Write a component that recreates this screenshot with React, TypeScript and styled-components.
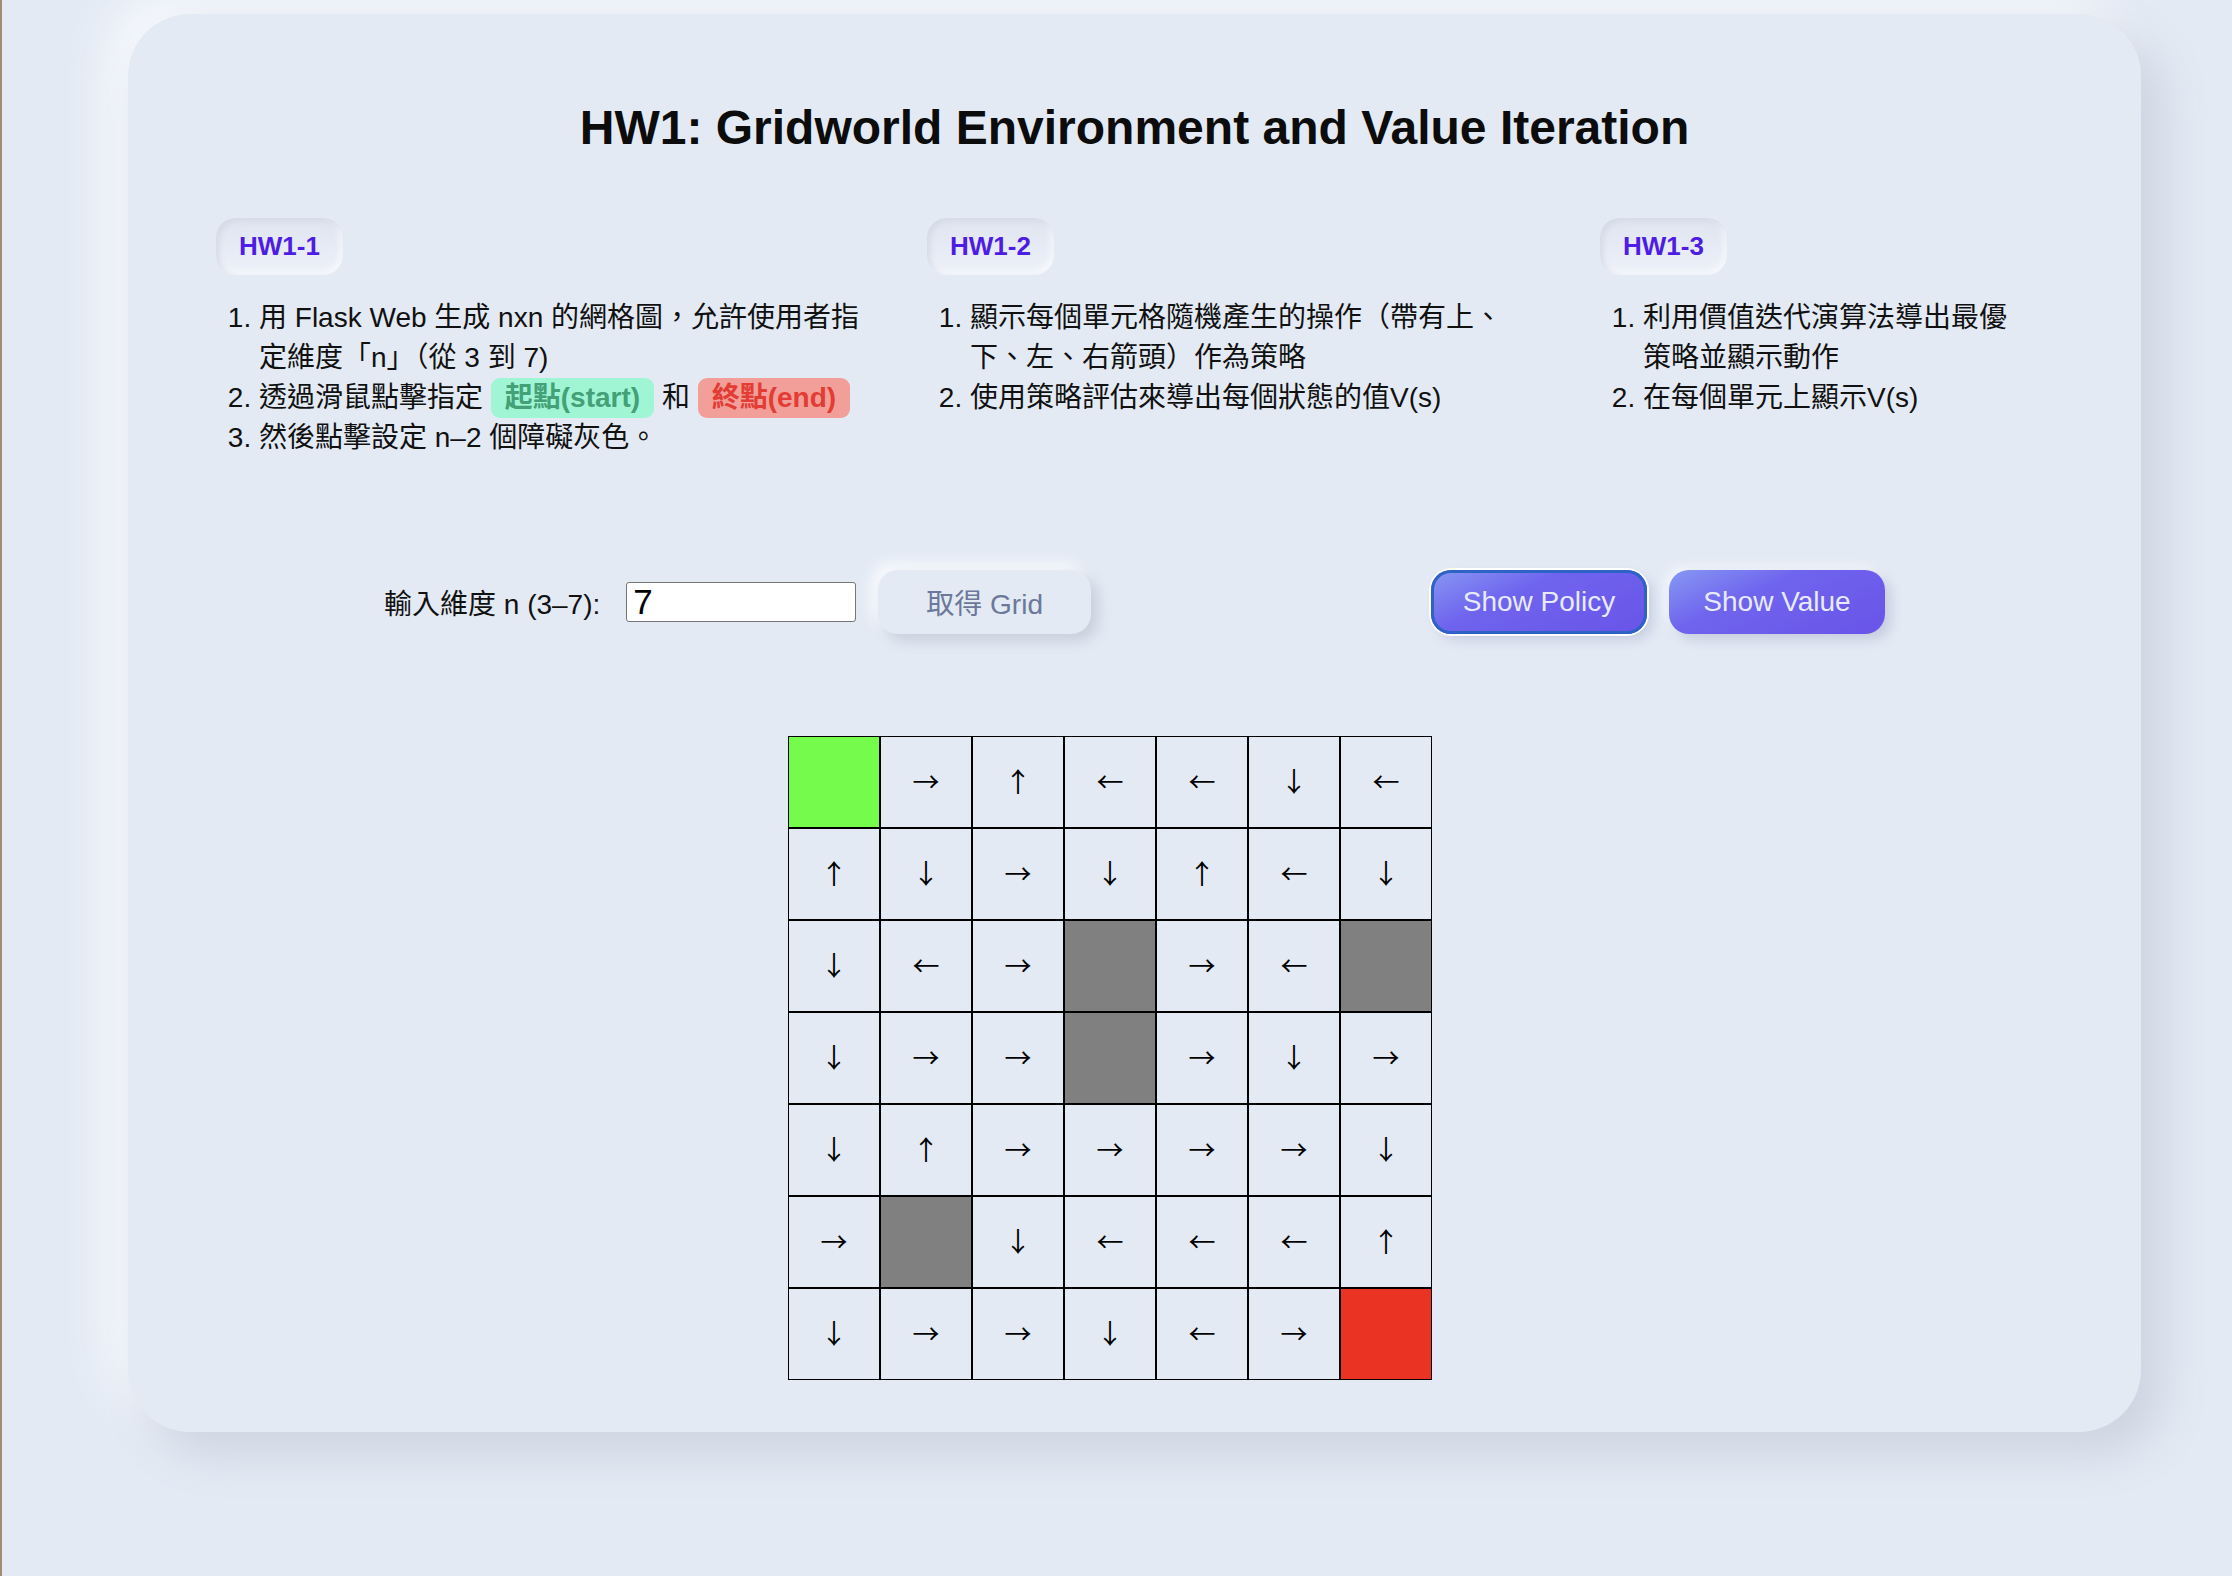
import React, { useState } from 'react';
import styled, { createGlobalStyle, css } from 'styled-components';

type CellKind = 'start' | 'end' | 'wall' | 'arrow';

interface Cell {
  kind: CellKind;
  arrow?: string;
}

const GlobalStyle = createGlobalStyle`
  html, body {
    margin: 0;
    padding: 0;
    background: #e3eaf4;
  }
  body {
    font-family: "Liberation Sans", "Noto Sans CJK TC", sans-serif;
    color: #111;
  }
`;

const Page = styled.div`
  min-height: 100vh;
  box-sizing: border-box;
  border-left: 2px solid #a08b74;
  padding: 14px 0 40px 126px;
`;

const Card = styled.main`
  width: 2013px;
  box-sizing: border-box;
  padding: 85px 88px 52px;
  border-radius: 62px;
  background: #e3eaf4;
  box-shadow: 22px 22px 46px #cdd4e1, -22px -22px 46px #f6f8fc;
`;

const Title = styled.h1`
  margin: 0;
  text-align: center;
  font-size: 48px;
  line-height: 58px;
  font-weight: 700;
  color: #0c0c0c;
`;

const Sections = styled.section`
  display: grid;
  grid-template-columns: 711px 673px 1fr;
  margin-top: 61px;
`;

const Section = styled.div`
  display: flex;
  flex-direction: column;
  align-items: flex-start;
`;

const Badge = styled.span`
  display: inline-flex;
  align-items: center;
  height: 57px;
  padding: 0 23px;
  border-radius: 20px;
  font-size: 26px;
  font-weight: 700;
  color: #4d1de3;
  background: linear-gradient(180deg, #dfe4f0 0%, #e8ecf6 60%, #eef1f9 100%);
  box-shadow: inset 3px 3px 6px #d3d9e6, inset -3px -3px 6px #f7f9fd;
`;

const Steps = styled.ol<{ $width: number }>`
  width: ${(p) => p.$width}px;
  margin: 23px 0 0;
  padding-left: 43px;
  box-sizing: border-box;
  font-size: 28px;
  line-height: 40px;
`;

const Tag = styled.span<{ $tone: 'green' | 'red' }>`
  display: inline-block;
  padding: 0 14px;
  border-radius: 9px;
  font-weight: 700;
  ${(p) =>
    p.$tone === 'green'
      ? css`
          background: #a0f5d5;
          color: #43a077;
        `
      : css`
          background: #f29f99;
          color: #e23c35;
        `}
`;

const Controls = styled.div`
  display: flex;
  justify-content: space-between;
  align-items: center;
  padding: 0 168px;
  margin-top: 112px;
`;

const Group = styled.div`
  display: flex;
  align-items: center;
  gap: 22px;
`;

const Label = styled.label`
  font-size: 28px;
  padding-right: 4px;
`;

const NumberInput = styled.input`
  width: 230px;
  height: 40px;
  box-sizing: border-box;
  padding: 0 6px;
  border: 1px solid #767676;
  border-radius: 3px;
  background: #fff;
  font-family: "Liberation Sans", sans-serif;
  font-size: 35px;
  color: #000;
  outline: none;
`;

const SoftButton = styled.button`
  height: 64px;
  padding: 0 48px;
  border: none;
  border-radius: 20px;
  background: #e3eaf4;
  color: #6b7899;
  font-family: inherit;
  font-size: 28px;
  box-shadow: 7px 7px 14px #c8cfdc, -7px -7px 14px #f8fafd;
  cursor: pointer;
`;

const PrimaryButton = styled.button<{ $focused?: boolean }>`
  width: 216px;
  height: 64px;
  border: none;
  border-radius: 20px;
  background: linear-gradient(155deg, #8798f3 0%, #6f64ee 38%, #6954e8 100%);
  color: #e8ebff;
  font-family: inherit;
  font-size: 28px;
  cursor: pointer;
  box-shadow: ${(p) =>
    p.$focused
      ? 'inset 0 0 0 3px #2e63c6, 0 0 0 2px #ffffff, 6px 6px 12px #c6cde0'
      : '6px 6px 12px #c6cde0, -4px -4px 10px #f3f5fb'};
`;

const BoardWrap = styled.div`
  display: flex;
  justify-content: center;
  padding-right: 49px;
  margin-top: 102px;
`;

const Board = styled.div<{ $n: number }>`
  display: grid;
  grid-template-columns: repeat(${(p) => p.$n}, 92px);
`;

const cellColors: Record<CellKind, string> = {
  start: '#75fb4c',
  end: '#ea3323',
  wall: '#808080',
  arrow: 'transparent',
};

const Square = styled.div<{ $kind: CellKind }>`
  width: 92px;
  height: 92px;
  box-sizing: border-box;
  border: 1px solid #000;
  display: flex;
  align-items: center;
  justify-content: center;
  padding-bottom: 3px;
  background: ${(p) => cellColors[p.$kind]};
  font-family: "Noto Sans CJK TC", "DejaVu Sans", sans-serif;
  font-size: 27px;
  line-height: 1;
  color: #000;
`;

const layout = [
  'S→↑←←↓←',
  '↑↓→↓↑←↓',
  '↓←→#→←#',
  '↓→→#→↓→',
  '↓↑→→→→↓',
  '→#↓←←←↑',
  '↓→→↓←→E',
];

const toCell = (ch: string): Cell =>
  ch === 'S' ? { kind: 'start' } : ch === 'E' ? { kind: 'end' } : ch === '#' ? { kind: 'wall' } : { kind: 'arrow', arrow: ch };

const cells: Cell[] = layout.flatMap((row) => Array.from(row).map(toCell));

export default function App() {
  const [n, setN] = useState('7');

  return (
    <Page>
      <GlobalStyle />
      <Card>
        <Title>HW1: Gridworld Environment and Value Iteration</Title>

        <Sections>
          <Section>
            <Badge>HW1-1</Badge>
            <Steps $width={650}>
              <li>用 Flask Web 生成 nxn 的網格圖，允許使用者指定維度「n」（從 3 到 7)</li>
              <li>
                透過滑鼠點擊指定 <Tag $tone="green">起點(start)</Tag> 和 <Tag $tone="red">終點(end)</Tag>
              </li>
              <li>然後點擊設定 n–2 個障礙灰色。</li>
            </Steps>
          </Section>
          <Section>
            <Badge>HW1-2</Badge>
            <Steps $width={589}>
              <li>顯示每個單元格隨機產生的操作（帶有上、下、左、右箭頭）作為策略</li>
              <li>使用策略評估來導出每個狀態的值V(s)</li>
            </Steps>
          </Section>
          <Section>
            <Badge>HW1-3</Badge>
            <Steps $width={421}>
              <li>利用價值迭代演算法導出最優策略並顯示動作</li>
              <li>在每個單元上顯示V(s)</li>
            </Steps>
          </Section>
        </Sections>

        <Controls>
          <Group>
            <Label htmlFor="dim">輸入維度 n (3–7):</Label>
            <NumberInput id="dim" value={n} onChange={(e) => setN(e.target.value)} />
            <SoftButton>取得 Grid</SoftButton>
          </Group>
          <Group>
            <PrimaryButton $focused>Show Policy</PrimaryButton>
            <PrimaryButton>Show Value</PrimaryButton>
          </Group>
        </Controls>

        <BoardWrap>
          <Board $n={7}>
            {cells.map((c, i) => (
              <Square key={i} $kind={c.kind}>
                {c.arrow}
              </Square>
            ))}
          </Board>
        </BoardWrap>
      </Card>
    </Page>
  );
}
